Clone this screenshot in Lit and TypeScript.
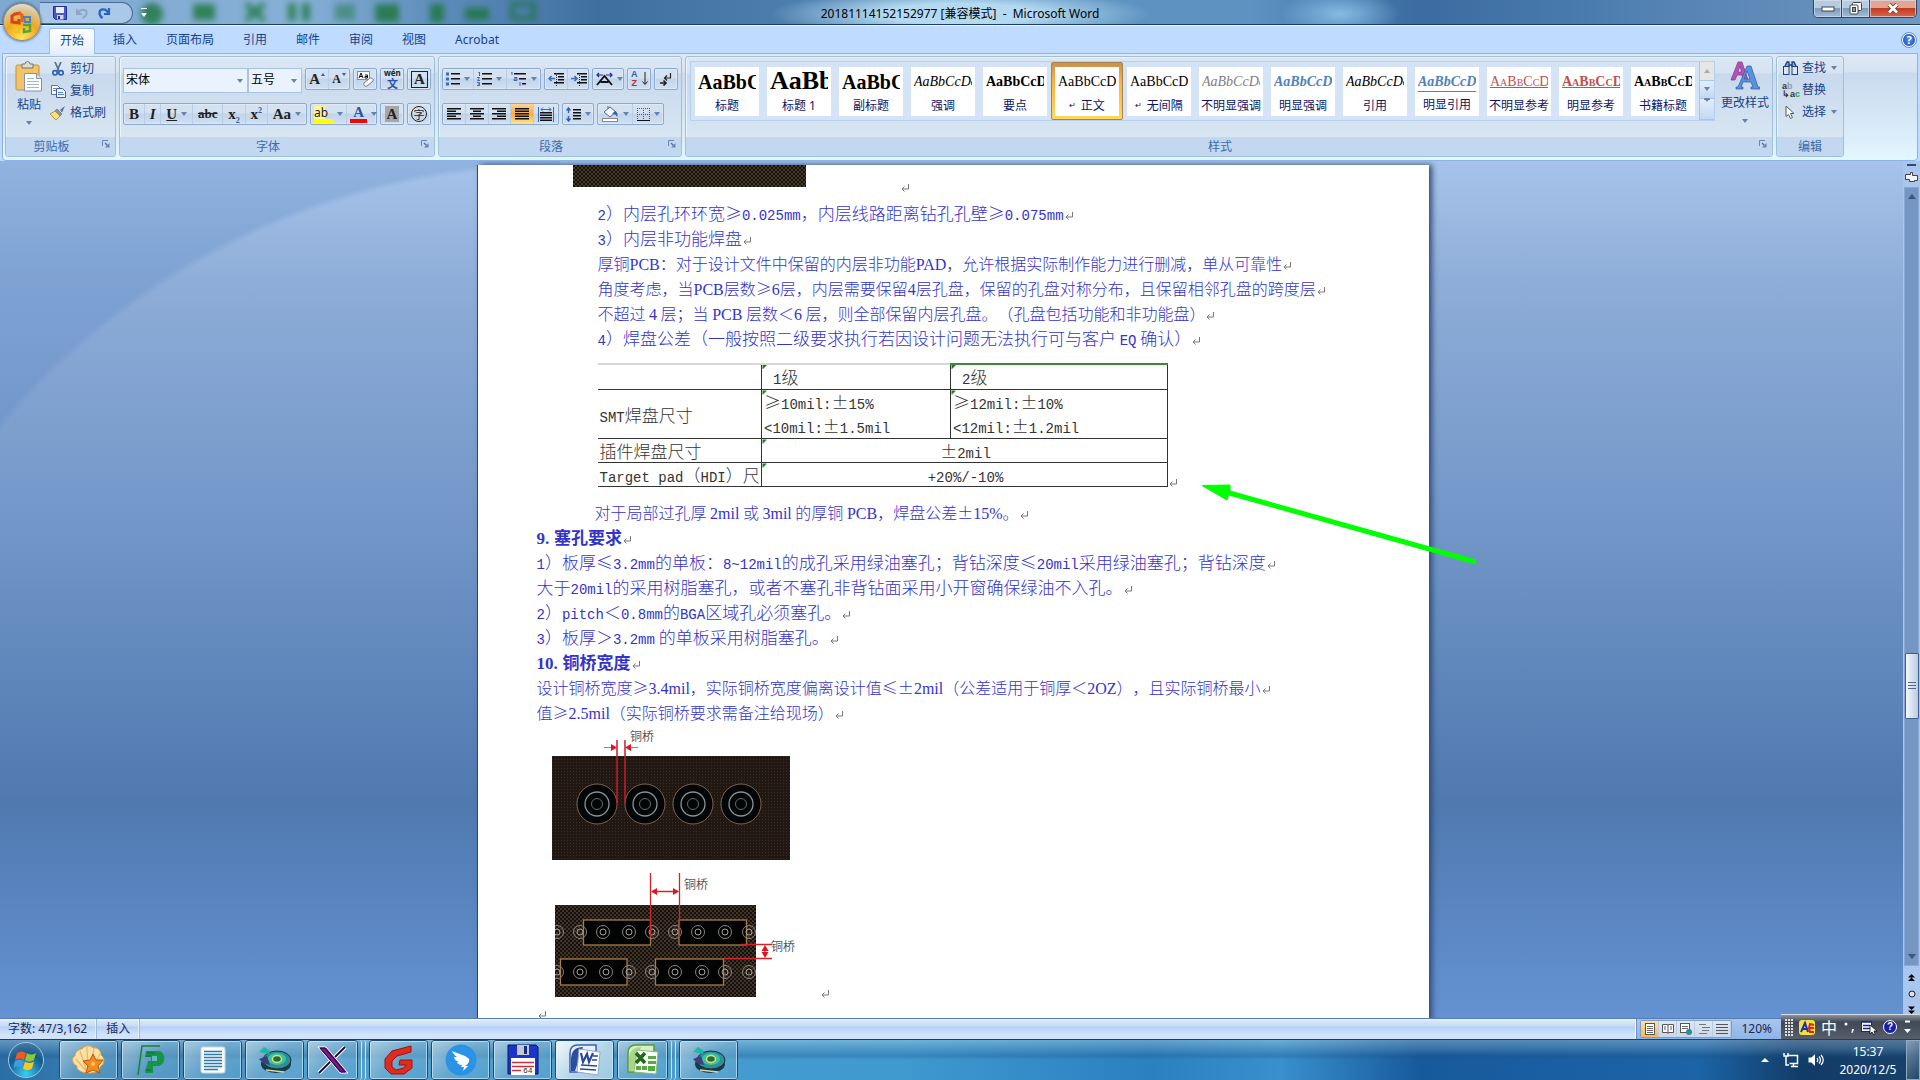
import { LitElement, html, css, svg, nothing, TemplateResult } from "lit";
import { customElement, property } from "lit/decorators.js";
import { classMap } from "lit/directives/class-map.js";

const lines = (rows: number[][], color = "#111") =>
  rows.map(([x, y, w]) => svg`<rect x=${x} y=${y} width=${w} height="1.5" fill=${color} />`);

const icons: Record<string, { w: number; h: number; body: TemplateResult | TemplateResult[] | any }> = {
  save: { w: 14, h: 14, body: svg`<path d="M0.500 0.500h13v13h-11l-2-2z" fill="#4b57c8" stroke="#25308c"/><rect x="3" y="1" width="8" height="6" fill="#e9effa"/><rect x="4" y="9" width="6.500" height="4.500" fill="#cfd6ee"/><rect x="5" y="10" width="2" height="3" fill="#25308c"/>` },
  undo: { w: 14, h: 14, body: svg`<path d="M2 3v5h5M2.500 7.500C5 3 11 2.500 11.500 6.500C12 9.500 9.500 11 7.500 12" fill="none" stroke="#8ea6c4" stroke-width="2"/>` },
  redo: { w: 14, h: 14, body: svg`<path d="M12 2v6H7M11.500 7.500C9 2 3 2.500 2.500 6.500C2.300 9.500 4 11 5.500 12" fill="none" stroke="#2c62c4" stroke-width="2.200"/>` },
  paste: { w: 28, h: 31, body: svg`<rect x="1" y="4" width="23" height="25" rx="1.500" fill="#f2c468" stroke="#c28f35"/><path d="M7 3h3a2.500 2.500 0 0 1 5 0h3v4H7z" fill="#dcdcd6" stroke="#77766c"/><path d="M9.500 12.500h12l5 5v12.500h-17z" fill="#fdfeff" stroke="#8293b4"/><path d="M21.500 12.500v5h5" fill="#d7e2f5" stroke="#8293b4"/><path d="M12 17.500h7M12 20.500h12M12 23.500h12M12 26.500h12" stroke="#a3b3d2"/>` },
  cut: { w: 14, h: 14, body: svg`<path d="M4 0l4 9M10 0l-4 9" stroke="#5a6f93" stroke-width="1.700"/><circle cx="4" cy="10.800" r="2.200" fill="none" stroke="#2e62b5" stroke-width="1.700"/><circle cx="10" cy="10.800" r="2.200" fill="none" stroke="#2e62b5" stroke-width="1.700"/>` },
  copy: { w: 15, h: 14, body: svg`<path d="M0.500 1.500h6l3 3v6h-9z" fill="#fff" stroke="#5174b4"/><path d="M5.500 4.500h6l3 3v6h-9z" fill="#eef4ff" stroke="#3c60a8"/><path d="M2 4.500h3M2 6.500h3M7 8.500h5M7 10.500h6" stroke="#5a80c4"/>` },
  brush: { w: 16, h: 14, body: svg`<path d="M15 0l-5 4 2 2.500z" fill="#5c63a8"/><path d="M7 3l5 5-2 2-5.500-4.500z" fill="#8f93a4" stroke="#555b78" stroke-width=".6"/><path d="M5 5l5 5-4 4L0 8z" fill="#f7e27a" stroke="#9d8433" stroke-width=".8"/>` },
  bullets: { w: 14, h: 14, body: svg`<rect x="0" y="0.500" width="3" height="3" fill="#3d68b4"/><rect x="0" y="5.500" width="3" height="3" fill="#3d68b4"/><rect x="0" y="10.500" width="3" height="3" fill="#3d68b4"/>${lines([[5, 1, 9], [5, 6, 9], [5, 11, 9]])}` },
  numbering: { w: 15, h: 14, body: svg`<path d="M1 0l1.500 0v4M0 5.500h2.500l-2 3h2.500M0 10.500h2.500v3h-2.500M1 12h1" fill="none" stroke="#3d68b4"/>${lines([[5, 1, 10], [5, 6, 10], [5, 11, 10]])}` },
  multilevel: { w: 17, h: 15, body: svg`<path d="M1 0h1v3M4 5.500h3v3h-3v-1.500h3M10 10v4" fill="none" stroke="#3d68b4"/>${lines([[4, 1, 12], [9, 6, 7], [12, 11, 4]])}` },
  outdent: { w: 16, h: 13, body: svg`${lines([[6, 0, 10], [10, 3, 6], [10, 6, 6], [6, 9, 10]])}<path d="M8.500 0v13" stroke="#333" stroke-dasharray="1 1"/><path d="M7 5.500H1M3.500 3L1 5.500L3.500 8" fill="none" stroke="#3d68b4" stroke-width="1.500"/>` },
  indent: { w: 16, h: 13, body: svg`${lines([[6, 0, 10], [10, 3, 6], [10, 6, 6], [6, 9, 10]])}<path d="M8.500 0v13" stroke="#333" stroke-dasharray="1 1"/><path d="M0 5.500H6M3.500 3L6 5.500L3.500 8" fill="none" stroke="#3d68b4" stroke-width="1.500"/>` },
  asian: { w: 17, h: 14, body: svg`<path d="M1 13L8.500 4L16 13M4.500 10h8" fill="none" stroke="#111" stroke-width="1.800"/><path d="M1 3h6M3 1L1 3l2 2M10 3h6M14 1l2 2-2 2" fill="none" stroke="#1b2a9c" stroke-width="1.200"/>` },
  pilcrow: { w: 12, h: 13, body: svg`<path d="M10.500 0v5H5M7 2.500L4.500 5L7 7.500" fill="none" stroke="#222" stroke-width="1.200"/><path d="M0 10h5M3.500 7.500L6 10l-2.500 2.500" fill="none" stroke="#222" stroke-width="1.600"/>` },
  left: { w: 14, h: 12, body: lines([[0, 0, 14], [0, 2.5, 9], [0, 5, 14], [0, 7.5, 9], [0, 10, 14]]) },
  center: { w: 14, h: 12, body: lines([[0, 0, 14], [3, 2.5, 8], [0, 5, 14], [3, 7.5, 8], [0, 10, 14]]) },
  right: { w: 14, h: 12, body: lines([[0, 0, 14], [5, 2.5, 9], [0, 5, 14], [5, 7.5, 9], [0, 10, 14]]) },
  justify: { w: 14, h: 12, body: lines([[0, 0, 14], [0, 2.5, 14], [0, 5, 14], [0, 7.5, 14], [0, 10, 14]]) },
  distribute: { w: 16, h: 15, body: svg`<path d="M0.500 0v15M15.500 0v15M3 2.500h10M5 0.500L3 2.500l2 2M11 0.500l2 2-2 2" fill="none" stroke="#3d68b4"/>${lines([[2, 5, 12], [2, 7.5, 12], [2, 10, 12], [2, 12.5, 12]])}` },
  spacing: { w: 15, h: 15, body: svg`<path d="M2.500 1v5M0.500 3.500l2-2.500 2 2.500M2.500 14V9M0.500 11.500l2 2.500 2-2.500" fill="none" stroke="#2f5fb0" stroke-width="1.400"/>${lines([[7, 2, 8], [7, 5, 8], [7, 8, 8], [7, 11, 8]])}` },
  bucket: { w: 17, h: 16, body: svg`<path d="M2 6l6-5 6 5-6 5z" fill="#f4f7fb" stroke="#516a92"/><path d="M6 3V0" stroke="#516a92"/><path d="M13 5c3 1 3 5 2 6-1-3-3-3-5-3z" fill="#3b5f9f"/><rect x="0.500" y="12.500" width="15" height="3" fill="#fff" stroke="#8a8a8a"/>` },
  borders: { w: 13, h: 13, body: svg`<path d="M0.500 0v12M6.500 0v12M12.500 0v12M0 0.500h13M0 6.500h13" stroke="#555" stroke-dasharray="1 1" fill="none"/><path d="M0 12.500h13" stroke="#111"/>` },
  eraser: { w: 17, h: 16, body: svg`<rect x="0.500" y="0.500" width="12" height="8" fill="#f4f8ff" stroke="#7a8fb4"/><path d="M2 7l2-5 2 5M2.800 5.500h2.500M8 4h2.500v3h-2.500v-1.500h2.500" stroke="#111" fill="none"/><path d="M7 12l6-5c2 0 4 1 3 3l-6 5c-2 1-4-1-3-3z" fill="#fdfdfd" stroke="#777"/>` },
  changeStyles: { w: 30, h: 29, body: svg`<path d="M1 19L8 1h4l6 18h-4l-2-5H7l-2 5zM8 11h3.500L10 5z" fill="#b653b5" stroke="#7d3080" stroke-width=".7"/><path d="M6 28v-2h2L17 5h4l7 21h2v2h-9v-2h2l-2-5h-8l-2 5h2v2zM14 18h6l-3-8z" fill="#5a93dc" stroke="#2b5ca6" stroke-width=".7"/>` },
  find: { w: 15, h: 14, body: svg`<path d="M2 5l2-4h2v5M13 5l-2-4H9v5M6 4h3" fill="#88a6d6" stroke="#203f7d" stroke-width="1.300"/><rect x="0.500" y="5.500" width="5.500" height="8" fill="#dbe6f6" stroke="#203f7d"/><rect x="9" y="5.500" width="5.500" height="8" fill="#dbe6f6" stroke="#203f7d"/>` },
  select: { w: 11, h: 14, body: svg`<path d="M1 1v10.500l2.500-2 2 4 2-1-2-4h3.500z" fill="#fff" stroke="#555d6f"/>` },
  launcher: { w: 8, h: 8, body: svg`<path d="M0.500 6V0.500H6" fill="none" stroke="#6a87b4"/><path d="M3 3l3 3" stroke="#4f6f9f" stroke-width="1.200"/><path d="M7.500 3v4.500H3z" fill="#6a87b4"/>` },
  ret: { w: 8, h: 8, body: svg`<path d="M7.500 0v5H1M3.500 2.500L1 5l2.500 2.500" fill="none" stroke="#777"/>` },
  network: { w: 17, h: 16, body: svg`<path d="M4.500 3.500h10v8h-8" fill="none" stroke="#fff" stroke-width="1.500"/><path d="M8 14.500h7M10.500 11.500v3" stroke="#fff" stroke-width="1.500"/><path d="M1 1v3h4V1M3 4v9h3" fill="none" stroke="#fff" stroke-width="1.500"/>` },
  volume: { w: 16, h: 14, body: svg`<path d="M0.500 4.500h3L7 1v12L3.500 9.500h-3z" fill="#fff"/><path d="M9 5q1.500 2 0 4M11 3.500q3 3.500 0 7M13 2q4.500 5 0 10" fill="none" stroke="#fff" stroke-width="1.200"/>` },
  shell: { w: 34, h: 30, body: svg`<path d="M17 28C10 28 4 25 5 21C-1 18 0 12 3 11C3 6 8 4 10 4C13 0 19 0 21 3C26 2 29 6 29 10C33 13 33 19 28 22C28 26 23 28 17 28z" fill="#fde0a4" stroke="#e0a04a"/><path d="M15 27L4 14M15 27L8 6M16 27L15 2M17 27L22 4M18 27L28 9" stroke="#efb566" stroke-width="1.300"/><path d="M21 9l3 6 7 0-5 6 2 7-7-3-7 3 2-7-5-5 7-1z" fill="#f58a1f" stroke="#b55a0c"/><circle cx="21" cy="19" r="2" fill="#fbc26a"/>` },
  pads: { w: 32, h: 32, body: svg`<path d="M3 31L7 2H25" fill="none" stroke="#13833a" stroke-width="1.500"/><path d="M11 7h12c8 0 9 14 0 15h-5v7h-8l3-12h3v-4h-6z" fill="#159447"/><path d="M17 12h5v5h-5z" fill="#5fb6c4"/><path d="M12 9h8M11 12h5M10 26h6" stroke="#0c6f30"/>` },
  notepad: { w: 26, h: 28, body: svg`<rect x="1" y="1" width="24" height="26" rx="2" fill="#f7fbfd" stroke="#c4d8e2"/><path d="M4 5.500h18M4 8.500h18M4 11.500h18M4 14.500h18M4 17.500h18M4 20.500h18M4 23.500h14" stroke="#2c7ba6" stroke-width="1.400"/>` },
  reel: { w: 34, h: 28, body: svg`<ellipse cx="18" cy="18" rx="15" ry="9" fill="#1c3a4a"/><ellipse cx="19" cy="14" rx="14" ry="9" fill="#2f8f94" stroke="#14323c"/><ellipse cx="19" cy="13" rx="9" ry="6" fill="#38c4a8"/><ellipse cx="19" cy="13" rx="4.500" ry="3.500" fill="#1f6b4c" stroke="#e4de62" stroke-width="1.500"/><path d="M1 6l5-5 6 4-1 3z" fill="#1fb7a6"/><path d="M1 13l8-3 3 9-7-2z" fill="#3c3f7a"/><path d="M8 24l18 2" stroke="#cfd9a0" stroke-width="1.500"/>` },
  cross: { w: 32, h: 28, body: svg`<path d="M28 1L2 27" stroke="#fff" stroke-width="4"/><path d="M28 1L2 27" stroke="#1e0d2c" stroke-width="2"/><path d="M1 1h8l22 26h-8z" fill="#6b1280" stroke="#fff"/><path d="M3 2h5l20 24h-4z" fill="#7c1894" stroke="#1d0a25"/>` },
  gee: { w: 30, h: 30, body: svg`<path d="M27 1v6l-14 4-5 5v6l4 3 8-2 2-3h-7l1-5h12v8l-8 6-13 0-6-6v-9l7-8z" fill="#e02b20" stroke="#9d130d"/>` },
  bird: { w: 32, h: 32, body: svg`<circle cx="16" cy="16" r="15.500" fill="#2a93e6"/><path d="M7 7c6 3 14 4 17 8 1 3-2 6-4 7l3 0-5 5 1-4-3 0 1-2c-3 0-5-2-5-3l2 0c-3-1-5-3-5-5l3 0c-3-2-4-4-5-6z" fill="#fff"/>` },
  floppy: { w: 32, h: 32, body: svg`<path d="M1 1h28l2 2v27H1z" fill="#1c34c8" stroke="#0a145e"/><rect x="10" y="1" width="12" height="10" fill="#c3c8d4"/><rect x="17" y="2" width="3" height="8" fill="#1c2c80"/><rect x="4" y="14" width="24" height="17" fill="#fff"/><path d="M5 18.500h22M5 22.500h22M5 26.500h9" stroke="#c8323c" stroke-width="1.300"/><text x="16" y="29" font-size="8" font-family="Liberation Mono, monospace" fill="#333">64</text>` },
  word: { w: 32, h: 32, body: svg`<path d="M1 28V9Q1 1 9 1H27V28z" fill="#e8eefa" stroke="#3a5fae" stroke-width="1.500"/><path d="M2 27V14Q3 3 14 3L6 27z" fill="#2a4f9f"/><path d="M10 5l21 3-2 23-21-3z" fill="#fdfeff" stroke="#93a6cf"/><path d="M12 9l2 9 4-8 2 8 4-9" fill="none" stroke="#28489a" stroke-width="2.200"/><path d="M24 12h5M23 16h5M12 21l16 1M11 25l16 1" stroke="#28489a" stroke-width="1.600"/>` },
  excel: { w: 32, h: 32, body: svg`<path d="M1 28V9Q1 1 9 1H27V28z" fill="#d9efc8" stroke="#5a9c32" stroke-width="1.500"/><path d="M2 27V14Q3 3 14 3L6 27z" fill="#a9d48a"/><path d="M10 6l21 2-2 22-22-2z" fill="#fbfffa" stroke="#8cba74"/><path d="M9 9l9 10M18 9l-9 10" stroke="#1f6a1b" stroke-width="3.500"/><path d="M21 12h8v3h-8zM21 17h8v3h-8zM9 22h5v4h-5zM15 22h5v4h-5zM21 22h7v5h-7z" fill="#5aa845"/>` },
};

const icon = (name: string) => {
  const i = icons[name];
  return html`<svg class="ic" width=${i.w} height=${i.h} viewBox="0 0 ${i.w} ${i.h}" aria-hidden="true">${i.body}</svg>`;
};

const caret = html`<span class="caret"></span>`;

/** Wraps each run of Latin words so that it gets its own typeface; spaces beside Chinese text stay outside. */
const mixed = (text: string) =>
  text.split(/([\x21-\x7e]+(?: [\x21-\x7e]+)*)/).filter(Boolean).map((part) =>
    /^[\x21-\x7e]/.test(part) ? html`<span class="latin">${part}</span>` : part);

const sharedStyles = css`
  * { box-sizing: border-box; }
  button, select { font: inherit; color: inherit; margin: 0; padding: 0; border: 0; background: none; border-radius: 0; }
  .ic { display: block; flex: none; }
  .caret { flex: none; border: 3px solid transparent; border-top: 4px solid #6482b0; border-bottom: 0; width: 0; height: 0; }
`;

@customElement("title-bar")
class TitleBar extends LitElement {
  static styles = [sharedStyles, css`
    :host {
      display: flex; height: 25px; position: relative; overflow: hidden;
      border-bottom: 1px solid #eaf5ff; box-shadow: inset 0 -1px #1d3c5e;
      background:
        radial-gradient(ellipse 190px 26px at 960px 14px, #b4daf2 40%, transparent 100%),
        radial-gradient(ellipse 60px 24px at 1340px 14px, #86bbe4, transparent),
        linear-gradient(90deg, #7ea8cf 0, #86b0d6 300px, #5c8cba 440px, #3f6f9f 600px, #4777a6 700px, #5d93c0 1100px, #5e92c2 1250px, #3b6ba0 1420px, #4c7db0 1600px, #4d7db0 75%, #7097c0);
    }
    .reflections { position: absolute; left: 0; top: 0; filter: blur(3px); opacity: .75; }
    .side { flex: 1; display: flex; align-items: flex-start; }
    .side.end { justify-content: flex-end; }
    .quick { position: relative; display: flex; align-items: center; gap: 8px; margin: 2px 0 0 40px; padding: 0 13px;
      border: 1px solid #486c95; border-left: 0; border-radius: 0 11px 11px 0; background: #b4cfeccc; height: 22px; width: 93px; }
    .quick button { display: block; }
    .more { position: relative; margin: 8px 8px; width: 6px; height: 9px; border-top: 1px solid #fff; padding-top: 3px; }
    .more .caret { display: block; border-top-color: #fff; }
    h1 { position: relative; margin: 0; font: 12px/27px "Noto Sans", "Noto Sans CJK SC", sans-serif; color: #000; white-space: pre; }
    .window { position: relative; display: flex; height: 18px; margin-right: 3px; border: 1px solid #2b4868; border-top: 0; border-radius: 0 0 5px 5px; overflow: hidden; }
    .window button { display: grid; place-items: center; width: 28px; border-right: 1px solid #2b4868; box-shadow: inset 0 0 0 1px #d5e3f0aa; background: linear-gradient(#b8cbdf 45%, #7e9cbb 50%, #a4bdd6); }
    .window .close { width: 46px; border: 0; background: linear-gradient(#e3a493 45%, #c13a23 50%, #d9674c); }
  `];
  render() {
    return html`
      <svg class="reflections" width="700" height="26" aria-hidden="true">
        <g fill="#167332">
          <circle cx="152" cy="14" r="11"/><rect x="193" y="4" width="22" height="16"/>
          <path d="M246 4l18 16M264 4l-18 16" stroke="#167332" stroke-width="6"/><rect x="288" y="3" width="8" height="18"/><rect x="302" y="3" width="8" height="18"/>
          <rect x="335" y="4" width="20" height="16" opacity=".6"/><rect x="375" y="4" width="24" height="18"/><rect x="430" y="4" width="14" height="18"/>
          <rect x="465" y="8" width="24" height="12"/><rect x="512" y="4" width="22" height="14" fill="none" stroke="#167332" stroke-width="4"/>
        </g>
      </svg>
      <div class="side">
        <div class="quick">
          <button aria-label="保存">${icon("save")}</button><button aria-label="撤消">${icon("undo")}</button><button aria-label="恢复">${icon("redo")}</button>
        </div>
        <button class="more" aria-label="自定义快速访问工具栏">${caret}</button>
      </div>
      <h1>20181114152152977 [兼容模式]  -  Microsoft Word</h1>
      <div class="side end"><div class="window">
        <button aria-label="最小化"><svg width="14" height="8"><rect x="1" y="2" width="12" height="4" fill="#fff" stroke="#444"/></svg></button>
        <button aria-label="还原"><svg width="13" height="13"><rect x="3.500" y="0.500" width="9" height="8" rx="1" fill="#fff" stroke="#444"/><rect x="1" y="3" width="8" height="9" rx="1" fill="#fff" stroke="#444"/><rect x="3.500" y="5.500" width="3" height="4" fill="#7e9cbb" stroke="#444"/></svg></button>
        <button class="close" aria-label="关闭"><svg width="14" height="11"><path d="M3 1.500l8 8M11 1.500l-8 8" stroke="#543" stroke-width="4.500"/><path d="M3 1.500l8 8M11 1.500l-8 8" stroke="#fff" stroke-width="2.800"/></svg></button>
      </div></div>`;
  }
}

@customElement("ribbon-group")
class RibbonGroup extends LitElement {
  @property() label = "";
  @property({ type: Boolean }) launcher = false;
  static styles = [sharedStyles, css`
    :host { display: flex; flex-direction: column; height: 101px; border: 1px solid #9fbfdb; border-radius: 3px; overflow: hidden;
      box-shadow: inset 1px 1px #eaf3fc; background: linear-gradient(#dce7f4 0, #d7e3f2 16px, #c8d9ed 17px, #d8e6f2 80px); }
    .body { flex: 1; min-height: 0; }
    footer { display: flex; align-items: center; height: 19px; background: #c1d8f0; color: #3e6aaa; padding: 0 5px; }
    span { flex: 1; text-align: center; }
    span.offset { padding-right: 10px; }
    button { margin-top: -5px; }
  `];
  render() {
    return html`<div class="body"><slot></slot></div>
      <footer><span class=${this.launcher ? "offset" : ""}>${this.label}</span>${this.launcher ? html`<button aria-label=${this.label + "设置"}>${icon("launcher")}</button>` : nothing}</footer>`;
  }
}

const styleCards = [
  { name: "标题", kind: "big", sample: "AaBbC" }, { name: "标题 1", kind: "huge", sample: "AaBb" }, { name: "副标题", kind: "big", sample: "AaBbC" },
  { name: "强调", kind: "italic" }, { name: "要点", kind: "bold", sample: "AaBbCcD" }, { name: "正文", kind: "", mark: true, selected: true },
  { name: "无间隔", kind: "", mark: true }, { name: "不明显强调", kind: "italic grey" }, { name: "明显强调", kind: "italic bold blue" },
  { name: "引用", kind: "italic" }, { name: "明显引用", kind: "italic bold blue ruled" }, { name: "不明显参考", kind: "caps red under", sample: "AaBbCcD" },
  { name: "明显参考", kind: "caps red bold under", sample: "AaBbCcD" }, { name: "书籍标题", kind: "caps bold", sample: "AaBbCcD" },
];

@customElement("word-ribbon")
class WordRibbon extends LitElement {
  static styles = [sharedStyles, css`
    :host { display: block; background: #bfdbff; font: 12px/16px "Noto Sans", "Noto Sans CJK SC", sans-serif; color: #15428b; }
    nav { display: flex; align-items: flex-end; gap: 7px; height: 27px; padding: 0 4px 0 49px; }
    nav button { height: 25px; padding: 0 11px 2px; }
    nav .active { background: linear-gradient(#fff, #e4effb); border: 1px solid #9dc0ea; border-bottom: 0; border-radius: 3px 3px 0 0; padding: 0 10px 2px; margin-bottom: -1px; height: 26px; z-index: 1; }
    .help { margin: 0 0 6px auto; padding: 0; height: 14px; width: 14px; border-radius: 50%; background: radial-gradient(#4f8ae8, #1d4fb4); border: 1px solid #fff; outline: 1px solid #6c94cf; color: #fff; font-weight: 700; font-size: 11px; line-height: 12px; }
    .panel { display: flex; gap: 3px; margin: 0 2px; padding: 2px 73px 3px 2px; border: 1px solid #8db2e3; border-radius: 0 0 4px 4px; background: linear-gradient(#dfe9f5 0, #d5e3f2 18px, #c9daee 19px, #dceefa 85px, #e2f8ff); }
    .cols { display: flex; height: 100%; }
    .tool { display: flex; align-items: center; gap: 4px; height: 22px; white-space: nowrap; }
    .tool .slot { width: 16px; display: grid; place-items: center; }
    .big { display: flex; flex-direction: column; align-items: center; height: 70px; white-space: nowrap; }
    .big .txt { margin: 5px 0 8px; }
    .clip { gap: 7px; padding: 4px 0 0 9px; }
    .clip .stack { margin: -3px 0 0; }
    .rows { display: flex; flex-direction: column; padding: 11px 3px 0; }
    .row { display: flex; gap: 3px; height: 35px; align-items: flex-start; }
    .set { display: flex; height: 22px; border: 1px solid #8ba9d3; border-radius: 2px; box-shadow: inset 0 0 0 1px #e8f1fb88; background: linear-gradient(#d4e1f1 45%, #c2d4ea 50%, #d0e0f2); }
    .set button { flex: auto; display: flex; align-items: center; justify-content: center; gap: 4px; padding: 0 3px; border-right: 1px solid #b9cde6; }
    .set button:last-child { border-right: 0; }
    .set .on { background: linear-gradient(#fbd49a, #fdac3c 50%, #ffe58c); }
    .combo { display: flex; align-items: center; height: 25px; border: 1px solid #a9c3e5; background: #eaf3fd; color: #000; padding-right: 4px; }
    .combo select { appearance: none; flex: 1; min-width: 0; height: 100%; padding: 0 2px 2px; }
    .combo + .combo { margin-left: -3px; }
    .family { width: 125px; } .size { width: 54px; }
    .glyph { font: bold 15px/18px "Liberation Serif", serif; color: #222; }
    .glyph.small { font-size: 12px; } .glyph.i { font-style: italic; } .glyph.u { text-decoration: underline; }
    .glyph.s { text-decoration: line-through; font-size: 13px; }
    .glyph sub, .glyph sup { font-size: 8px; line-height: 0; color: #2d5cb4; }
    .glyph.boxed { border: 1px solid #222; padding: 0 2px; line-height: 15px; }
    .glyph.shade { background: #a7a7a7; padding: 0 2px; line-height: 16px; }
    .glyph.ring { border: 1px solid #222; border-radius: 50%; width: 16px; height: 16px; font: 11px/14px "Noto Sans CJK SC", sans-serif; text-align: center; }
    .glyph.pen { font: 12px/13px "Noto Sans", sans-serif; border-bottom: 4px solid #ff0; padding-right: 5px; background: linear-gradient(90deg, #fff59a 60%, transparent 60%); }
    .glyph.ink { color: #2b579a; line-height: 14px; border-bottom: 4px solid #f00; padding: 0 3px; }
    .tip { width: 0; height: 0; border: 2px solid transparent; margin: 0 0 9px -3px; }
    .tip.up { border-bottom: 3px solid #2d5cb4; border-top: 0; } .tip.down { border-top: 3px solid #2d5cb4; border-bottom: 0; }
    .phonetic { font: 700 8px/8px "Noto Sans", sans-serif; color: #222; }
    .phonetic b { display: block; font: 700 11px/12px "Noto Sans CJK SC", sans-serif; color: #2c50b0; }
    .az { font: bold 9px/9px "Liberation Sans", sans-serif; color: #2d5cb4; } .az b { display: block; color: #a83232; }
    .gallery { flex: 1; display: flex; height: 60px; margin: 4px 6px 0 4px; border: 1px solid #b5cfed; background: #d4e4f6; }
    .cards { flex: 1; display: flex; overflow: hidden; }
    .card { flex: none; width: 72px; height: 58px; padding: 4px 4px; }
    .card .face { display: block; width: 64px; height: 49px; background: #fff; padding: 0 3px; overflow: hidden; }
    .card.selected { padding: 1px; background: linear-gradient(#c8924c, #fbb040 30%, #ffd75e); border: 1px solid #a58357; border-radius: 2px; }
    .card.selected .face { margin: 2px; }
    .sample { display: block; overflow: hidden; white-space: nowrap; height: 30px; text-align: left; color: #000; font: 14px/30px "Liberation Serif", serif; }
    .sample.big { font-weight: 700; font-size: 20px; }
    .sample.huge { font-weight: 700; font-size: 26px; line-height: 28px; }
    .sample.italic { font-style: italic; } .sample.bold { font-weight: 700; }
    .sample.grey { color: #808080; } .sample.blue { color: #4f81bd; } .sample.red { color: #c0504d; }
    .sample.caps { font-variant: small-caps; } .sample.under { text-decoration: underline; }
    .sample.ruled { height: 25px; border-bottom: 1px solid #4f81bd; margin-bottom: 5px; }
    .name { display: flex; justify-content: center; align-items: center; gap: 5px; height: 16px; white-space: nowrap; color: #0a1468; margin: 1px -3px 0; }
    .mark { font: 8px/9px "DejaVu Sans", sans-serif; }
    .scroll { display: flex; flex-direction: column; width: 15px; border-left: 1px solid #a9c4e6; }
    .scroll button { flex: 1; display: grid; place-items: center; border-bottom: 1px solid #a9c4e6; background: linear-gradient(#e3eefb, #c3d8f2); }
    .scroll button:first-child { background: #e6e6e6; }
    .scroll .up { transform: rotate(180deg); border-top-color: #aaa; }
    .scroll .end { border-top: 1px solid #6482b0; padding-top: 3px; }
    .change { width: 56px; margin-right: 4px; padding-top: 4px; height: 76px; }
    .edit { padding: 0 0 0 5px; }
    .edit .caret { margin-left: 1px; }
    .ab { font: bold 9px/8px "Liberation Sans", sans-serif; color: #333; text-align: left; }
    .ab i { font-style: normal; color: #999; } .ab b { color: #3a9a3a; }
    .clipboard { width: 111px; } .font { width: 316px; } .para { width: 244px; } .styles { flex: 1; min-width: 0; } .editing { width: 68px; }
    .w24 { width: 24px; } .w32 { width: 32px; } .w45 { width: 45px; } .w67 { width: 67px; } .w99 { width: 99px; } .w117 { width: 117px; } .w183 { width: 184px; }
  `];

  private tool(name: string, label: string, arrow = false) {
    return html`<button class="tool"><span class="slot">${icon(name)}</span><span>${label}</span>${arrow ? caret : nothing}</button>`;
  }
  private act(name: string, label: string, arrow = false, on = false) {
    return html`<button class=${classMap({ on })} aria-label=${label}>${icon(name)}${arrow ? caret : nothing}</button>`;
  }

  render() {
    return html`
      <nav>
        ${["开始", "插入", "页面布局", "引用", "邮件", "审阅", "视图", "Acrobat"].map((t, i) => html`<button class=${classMap({ active: i === 0 })}>${t}</button>`)}
        <button class="help" aria-label="帮助">?</button>
      </nav>
      <div class="panel">
        <ribbon-group class="clipboard" label="剪贴板" launcher>
          <div class="cols clip">
            <button class="big">${icon("paste")}<span class="txt">粘贴</span>${caret}</button>
            <div class="stack">${this.tool("cut", "剪切")}${this.tool("copy", "复制")}${this.tool("brush", "格式刷")}</div>
          </div>
        </ribbon-group>
        <ribbon-group class="font" label="字体" launcher>
          <div class="rows">
            <div class="row">
              <div class="combo family"><select aria-label="字体"><option>宋体</option></select>${caret}</div>
              <div class="combo size"><select aria-label="字号"><option>五号</option></select>${caret}</div>
              <div class="set w45"><button aria-label="增大字体"><span class="glyph">A</span><span class="tip up"></span></button><button aria-label="缩小字体"><span class="glyph small">A</span><span class="tip down"></span></button></div>
              <div class="set w24">${this.act("eraser", "清除格式")}</div>
              <div class="set w24"><button aria-label="拼音指南"><span class="phonetic">wén<b>文</b></span></button></div>
              <div class="set w24"><button aria-label="字符边框"><span class="glyph boxed">A</span></button></div>
            </div>
            <div class="row">
              <div class="set w183">
                <button aria-label="加粗"><span class="glyph">B</span></button><button aria-label="倾斜"><span class="glyph i">I</span></button>
                <button aria-label="下划线"><span class="glyph u">U</span>${caret}</button><button aria-label="删除线"><span class="glyph s">abc</span></button>
                <button aria-label="下标"><span class="glyph">x<sub>2</sub></span></button><button aria-label="上标"><span class="glyph">x<sup>2</sup></span></button>
                <button aria-label="更改大小写"><span class="glyph">Aa</span>${caret}</button>
              </div>
              <div class="set w67"><button aria-label="突出显示"><span class="glyph pen">ab</span>${caret}</button><button aria-label="字体颜色"><span class="glyph ink">A</span>${caret}</button></div>
              <div class="set w24"><button aria-label="字符底纹"><span class="glyph shade">A</span></button></div>
              <div class="set w24"><button aria-label="带圈字符"><span class="glyph ring">字</span></button></div>
            </div>
          </div>
        </ribbon-group>
        <ribbon-group class="para" label="段落" launcher>
          <div class="rows">
            <div class="row">
              <div class="set w99">${this.act("bullets", "项目符号", true)}${this.act("numbering", "编号", true)}${this.act("multilevel", "多级列表", true)}</div>
              <div class="set w45">${this.act("outdent", "减少缩进量")}${this.act("indent", "增加缩进量")}</div>
              <div class="set w32">${this.act("asian", "中文版式", true)}</div>
              <div class="set w24"><button aria-label="排序"><span class="az">A<b>Z</b></span><svg width="6" height="14"><path d="M3 0v12M0.500 9.500L3 12.500l2.500-3" fill="none" stroke="#222"/></svg></button></div>
              <div class="set w24">${this.act("pilcrow", "显示编辑标记")}</div>
            </div>
            <div class="row">
              <div class="set w117">${this.act("left", "左对齐")}${this.act("center", "居中")}${this.act("right", "右对齐")}${this.act("justify", "两端对齐", false, true)}${this.act("distribute", "分散对齐")}</div>
              <div class="set w32">${this.act("spacing", "行距", true)}</div>
              <div class="set w67">${this.act("bucket", "底纹", true)}${this.act("borders", "边框", true)}</div>
            </div>
          </div>
        </ribbon-group>
        <ribbon-group class="styles" label="样式" launcher>
          <div class="cols">
            <div class="gallery">
              <div class="cards">
                ${styleCards.map((c) => html`<button class=${classMap({ card: true, selected: !!c.selected })}>
                  <span class="face"><span class="sample ${c.kind}">${c.sample ?? "AaBbCcDc"}</span><span class="name">${c.mark ? html`<span class="mark">↵</span>` : nothing}${c.name}</span></span></button>`)}
              </div>
              <div class="scroll"><button aria-label="上一行"><span class="caret up"></span></button><button aria-label="下一行">${caret}</button><button aria-label="其他"><span class="end">${caret}</span></button></div>
            </div>
            <button class="big change">${icon("changeStyles")}<span class="txt">更改样式</span>${caret}</button>
          </div>
        </ribbon-group>
        <ribbon-group class="editing" label="编辑">
          <div class="edit">
            ${this.tool("find", "查找", true)}
            <button class="tool"><span class="slot ab"><span>a<i>b</i><br>↳a<b>c</b></span></span><span>替换</span></button>
            ${this.tool("select", "选择", true)}
          </div>
        </ribbon-group>
      </div>`;
  }
}

const target = (x: number, y: number) => svg`<circle cx=${x} cy=${y} r="6.500" fill="none" stroke="#8b8580"/><circle cx=${x} cy=${y} r="3" fill="none" stroke="#aaa49e"/>`;

@customElement("word-document")
class WordDocument extends LitElement {
  static styles = [sharedStyles, css`
    :host { display: flex; flex: 1; min-height: 0; overflow: hidden;
      background: linear-gradient(#a6c4ea 0, #8eadd8 14%, #6f94c6 45%, #5079b0 75%, #6492d2); }
    .view { flex: 1; overflow: hidden; padding: 4px 0 0 3px; min-width: 0;
      background: radial-gradient(ellipse 720px 700px at 560px 700px, #4f80c000 0, #4f80c000 99%, #4f80c040 100%) 0 0 / 560px 100% no-repeat; }
    .page { position: relative; width: 951px; min-height: 100%; margin: 0 auto; padding: 0 59px; background: #fff; box-shadow: 3px 0 6px #2c4a77, -1px 0 #2c4a77; color: #3333cc; }
    p, h2 { display: flex; align-items: center; height: 25px; margin: 0; padding-bottom: 3px; white-space: nowrap; text-spacing-trim: space-all; font: 300 16px/22px "Noto Sans CJK SC", sans-serif; }
    .latin { font-family: "Liberation Serif", serif; white-space: pre; font-weight: 400; line-height: 1; }
    .song, h2 { font-size: 17px; }
    h2 { font-weight: 700; }
    h2 .latin { font-weight: 700; padding-right: 1px; }
    .song .latin, td .latin, th .latin { font-family: "Liberation Mono", monospace; font-size: 14px; }
    .in { margin-left: 61px; } .near { margin-left: 58px; }
    .ic { margin: 5px 0 0 1px; }
    .top { display: flex; gap: 94px; padding-left: 36px; height: 37px; }
    .top .ic { margin-top: 19px; }
    .mesh { width: 233px; height: 22px; background: #1c140e conic-gradient(#4a3c2c 25%, #14100c 0 50%, #4a3c2c 0 75%, #14100c 0) 0 0 / 4px 4px; }
    .tol { display: flex; align-items: flex-end; height: 125px; margin: 10px 0 14px 61px; }
    table { width: 570px; table-layout: fixed; border-collapse: collapse; color: #333; font: 300 17px/23px "Noto Sans CJK SC", sans-serif; white-space: nowrap; border-top: 2px solid #d8d8d8; }
    td, th { border: 1px solid #333; padding: 0 0 0 2px; text-align: left; font-weight: 300; overflow: hidden; }
    .two { line-height: 24px; }
    tr > :first-child { border-left: 0; }
    thead td, thead th { border-top: 0; height: 26px; }
    thead th { padding-left: 11px; }
    thead th:last-child { border-top: 2px solid #3a8a3a; }
    .mid { text-align: center; }
    .flag { background: linear-gradient(135deg, #1d7a1d 3px, transparent 3px); }
    figure { margin: 0; display: flex; align-items: flex-end; }
    figure svg { display: block; }
    figure .ic { margin: 0 0 9px -16px; }
    .last { height: 14px; padding: 0; }
    .last .ic { margin: 2px 0 0 1px; }
    .label { font: 12px "Noto Sans CJK SC", sans-serif; fill: #555; }
    .arrow { position: absolute; left: 723px; top: 318px; }
    .bar { width: 17px; flex: none; display: flex; flex-direction: column; align-items: center; background: #a9c6ee; }
    .split { width: 9px; height: 2px; background: #2f4a74; margin: 3px 0 6px; }
    .track { flex: 1; width: 15px; display: flex; flex-direction: column; align-items: center; background: #7596c2; border: 1px solid #88a8d3; margin: 5px 0 4px; padding: 6px 0; }
    .track i { border: 4px solid transparent; border-top: 5px solid #3a557f; border-bottom: 0; }
    .track i:first-child { transform: rotate(180deg); }
    .before { flex: 456; } .after { flex: 236; }
    .thumb { width: 14px; height: 66px; border: 1px solid #3f5f94; border-radius: 1px; background: linear-gradient(90deg, #f4f8fd, #b9cbe2) ; display: grid; place-items: center; }
    .thumb svg { display: block; }
    .jump { display: grid; place-items: center; height: 16px; width: 15px; }
  `];

  private line(text: string, cls = "") {
    return html`<p class=${cls}><span>${mixed(text)}</span>${icon("ret")}</p>`;
  }

  render() {
    return html`
      <div class="view"><article class="page">
        <div class="top"><div class="mesh"></div>${icon("ret")}</div>
        ${this.line("2）内层孔环环宽≥0.025mm，内层线路距离钻孔孔壁≥0.075mm", "song in")}
        ${this.line("3）内层非功能焊盘", "song in")}
        ${this.line("厚铜PCB：对于设计文件中保留的内层非功能PAD，允许根据实际制作能力进行删减，单从可靠性", "in")}
        ${this.line("角度考虑，当PCB层数≥6层，内层需要保留4层孔盘，保留的孔盘对称分布，且保留相邻孔盘的跨度层", "in")}
        ${this.line("不超过 4 层；当 PCB 层数＜6 层，则全部保留内层孔盘。（孔盘包括功能和非功能盘）", "in")}
        ${this.line("4）焊盘公差（一般按照二级要求执行若因设计问题无法执行可与客户 EQ 确认）", "song in")}
        <div class="tol">
          <table>
            <colgroup><col width="164"><col width="189"><col width="217"></colgroup>
            <thead><tr><td></td><th class="flag">${mixed("1级")}</th><th class="flag">${mixed("2级")}</th></tr></thead>
            <tbody>
              <tr><td>${mixed("SMT焊盘尺寸")}</td><td class="two flag">${mixed("≥10mil:±15%")}<br>${mixed("<10mil:±1.5mil")}</td><td class="two flag">${mixed("≥12mil:±10%")}<br>${mixed("<12mil:±1.2mil")}</td></tr>
              <tr><td>插件焊盘尺寸</td><td class="mid flag" colspan="2">${mixed("±2mil")}</td></tr>
              <tr><td>${mixed("Target pad（HDI）尺")}</td><td class="mid flag" colspan="2">${mixed("+20%/-10%")}</td></tr>
            </tbody>
          </table>${icon("ret")}
        </div>
        ${this.line("对于局部过孔厚 2mil 或 3mil 的厚铜 PCB，焊盘公差±15%。", "near")}
        <h2><span>${mixed("9. 塞孔要求")}</span>${icon("ret")}</h2>
        ${this.line("1）板厚≤3.2mm的单板：8~12mil的成孔采用绿油塞孔；背钻深度≤20mil采用绿油塞孔；背钻深度", "song")}
        ${this.line("大于20mil的采用树脂塞孔，或者不塞孔非背钻面采用小开窗确保绿油不入孔。", "song")}
        ${this.line("2）pitch＜0.8mm的BGA区域孔必须塞孔。", "song")}
        ${this.line("3）板厚＞3.2mm 的单板采用树脂塞孔。", "song")}
        <h2><span>${mixed("10. 铜桥宽度")}</span>${icon("ret")}</h2>
        ${this.line("设计铜桥宽度≥3.4mil，实际铜桥宽度偏离设计值≤±2mil（公差适用于铜厚＜2OZ），且实际铜桥最小")}
        ${this.line("值≥2.5mil（实际铜桥要求需备注给现场）")}
        <figure>
          <svg width="300" height="140" viewBox="537 726 300 140" role="img" aria-label="铜桥示意图一">
            <defs><pattern id="m1" width="3" height="3" patternUnits="userSpaceOnUse"><rect width="3" height="3" fill="#211814"/><rect width="1" height="1" fill="#3a2c24"/></pattern></defs>
            <rect x="552" y="756" width="238" height="104" fill="url(#m1)"/>
            ${[597, 645, 693, 741].map((x) => svg`<circle cx=${x} cy="804" r="20" fill="#030606" stroke="#80624c"/><circle cx=${x} cy="804" r="12" fill="none" stroke="#87939a" stroke-width="1.300"/><circle cx=${x} cy="804" r="5.500" fill="none" stroke="#6a6a6a"/>`)}
            <path d="M617 740v63M625 740v63" stroke="#c81e26" stroke-width="1.500"/>
            <path d="M604 747.500h10M628 747.500h10" stroke="#c86a70"/>
            <path d="M611 744l6 3.500-6 3.500zM631 744l-6 3.500 6 3.500z" fill="#e0141e"/>
            <text class="label" x="630" y="741">铜桥</text>
          </svg>
        </figure>
        <figure>
          <svg width="300" height="141" viewBox="537 866 300 141" role="img" aria-label="铜桥示意图二">
            <defs><pattern id="m2" width="4" height="4" patternUnits="userSpaceOnUse"><rect width="4" height="4" fill="#17110d"/><rect width="2" height="2" fill="#40342a"/><rect x="2" y="2" width="2" height="2" fill="#40342a"/></pattern><clipPath id="c2"><rect x="555" y="905" width="201" height="92"/></clipPath></defs>
            <rect x="555" y="905" width="201" height="92" fill="url(#m2)"/>
            <g fill="#020303" stroke="#a87a48" stroke-width="1.300"><rect x="583.500" y="920" width="67" height="25"/><rect x="679" y="920" width="67.500" height="25"/><rect x="560.500" y="959" width="66.500" height="26"/><rect x="655.500" y="959" width="68" height="26"/></g>
            <g clip-path="url(#c2)">${[557, 580, 603, 629, 652, 675, 698, 725, 749].map((x) => target(x, 932))}${[557, 580, 606, 629, 652, 675, 702, 725, 749].map((x) => target(x, 972))}</g>
            <path d="M650.500 873v64M679.500 873v64M741 944.500h31M724 958.500h48M652 891.500h26M765 947v9" stroke="#d2222a" stroke-width="1.300"/>
            <path d="M657 888l-6 3.500 6 3.500zM673 888l6 3.500-6 3.500zM761.500 951l3.500-6 3.500 6zM761.500 952l3.500 6 3.500-6z" fill="#e0141e"/>
            <text class="label" x="684" y="889">铜桥</text><text class="label" x="771" y="951">铜桥</text>
          </svg>${icon("ret")}
        </figure>
        <p class="last">${icon("ret")}</p>
        <svg class="arrow" width="280" height="86" viewBox="1201 483 280 86" aria-hidden="true"><path d="M1226 492L1474 561.500" stroke="#0f0" stroke-width="5" stroke-linecap="round"/><path d="M1202 485.500L1230 485v5l-3 10z" fill="#0f0" stroke="#0f0"/></svg>
      </article></div>
      <div class="bar">
        <div class="split"></div>
        <svg width="13" height="10"><path d="M0.500 2.500h5v-2h2v3h5v5h-3v1h-5v-2h-4z" fill="#f3f3f3" stroke="#444"/></svg>
        <div class="track"><i></i><div class="before"></div><div class="thumb"><svg width="8" height="8"><path d="M0 0.500h8M0 3.500h8M0 6.500h8" stroke="#53678a"/></svg></div><div class="after"></div><i></i></div>
        <button class="jump" aria-label="前一页"><svg width="7" height="8"><path d="M3.500 0l3.500 3.500h-7zM3.500 3.500L7 7H0z"/></svg></button>
        <button class="jump" aria-label="选择浏览对象"><svg width="8" height="8"><circle cx="4" cy="4" r="3" fill="#dde" stroke="#222"/></svg></button>
        <button class="jump" aria-label="下一页"><svg width="7" height="8"><path d="M3.500 4L7 0.500H0zM3.500 8L7 4.500H0z"/></svg></button>
      </div>`;
  }
}

@customElement("status-bar")
class StatusBar extends LitElement {
  static styles = [sharedStyles, css`
    :host { display: flex; align-items: stretch; height: 22px; box-sizing: border-box; font: 12px/20px "Noto Sans", "Noto Sans CJK SC", sans-serif; color: #15285a;
      border-top: 1px solid #567db1; border-bottom: 1px solid #1c4064; background: linear-gradient(#f0f6fe 0, #d7e6f9 2px, #c7dcf8 7px, #b3d0f5 8px, #cfe2fa 15px, #d3e4f9); }
    .cell { padding: 0 9px; border-right: 1px solid #9db9dc; box-shadow: inset -1px 0 #fff8; }
    .cell:first-child { padding-left: 8px; }
    .tail { margin-left: auto; display: flex; align-items: center; background: linear-gradient(#a9c6ee, #8fb4e8); padding-left: 4px; border-left: 1px solid #fff; box-shadow: inset 1px 0 #6d90c0; }
    .views { display: flex; height: 18px; border: 1px solid #7f9cc6; border-radius: 2px; background: linear-gradient(#dde8f4, #c8d8ea); }
    .views button { width: 18px; display: grid; place-items: center; border-right: 1px solid #bccce0; }
    .views .on { background: linear-gradient(#ffe0a8, #ffb64e); }
    .zoom { padding: 0 9px; }
    .ime { display: flex; align-items: center; gap: 6px; align-self: flex-end; height: 25px; width: 139px; margin-top: -5px; padding: 0 4px; background: linear-gradient(#8b939e, #3f4854 30%, #565f6b); border-top: 1px solid #d8dde4; color: #fff; position: relative; }
    .ime b { font: 16px/20px "Noto Sans CJK SC", sans-serif; }
    .grip { width: 8px; height: 17px; background: radial-gradient(circle at 1px 1px, #ddd 1px, transparent 1px) 0 0 / 3px 3px; }
    .q { width: 14px; height: 14px; border-radius: 50%; background: #1420a8; border: 1px solid #fff; font: bold 10px/12px "Liberation Sans", sans-serif; text-align: center; }
  `];
  render() {
    const v = (rows: any) => html`<svg width="12" height="12">${rows}</svg>`;
    return html`
      <span class="cell">字数: 47/3,162</span><span class="cell">插入</span>
      <div class="tail">
        <div class="views">
          <button class="on" aria-label="页面视图">${v(svg`<rect x="1.500" y="0.500" width="9" height="11" fill="#fff" stroke="#555"/><path d="M3 3.500h6M3 5.500h6M3 7.500h6M3 9.500h6" stroke="#666"/>`)}</button>
          <button aria-label="阅读版式">${v(svg`<path d="M0.500 1.500h5l.5 1 .5-1h5v8h-5l-.5 1-.5-1h-5z" fill="#fff" stroke="#555"/><path d="M6 2v8M2 4h2M2 6h2M8 4h2M8 6h2" stroke="#555"/>`)}</button>
          <button aria-label="Web 版式">${v(svg`<rect x="0.500" y="0.500" width="9" height="9" fill="#fff" stroke="#555"/><path d="M2 3.500h6M2 5.500h6" stroke="#666"/><circle cx="9" cy="9" r="3" fill="#2f8a9a"/>`)}</button>
          <button aria-label="大纲">${v(svg`<path d="M1 1.500h7M4 4.500h8M4 7.500h7M1 10.500h8" stroke="#777"/>`)}</button>
          <button aria-label="草稿">${v(svg`<path d="M0 1.500h12M0 4.500h12M0 7.500h12M0 10.500h12" stroke="#555"/>`)}</button>
        </div>
        <button class="zoom" aria-label="缩放">120%</button>
        <div class="ime">
          <span class="grip"></span>
          <svg width="16" height="15" aria-hidden="true"><rect width="16" height="15" rx="3" fill="#f4e040"/><path d="M2 12L6 3l3 9M3 9h5" stroke="#1c2fae" stroke-width="2" fill="none"/><path d="M15 5l-4-1-1 4 1 4h4M10 8h5" stroke="#d22" stroke-width="2" fill="none"/></svg>
          <b>中</b>
          <svg width="12" height="12" aria-hidden="true"><circle cx="3" cy="3" r="1.500" fill="#fff"/><path d="M9 8h2l-1.500 4h-1z" fill="#fff"/></svg>
          <svg width="16" height="15" aria-hidden="true"><rect x="0.500" y="1.500" width="10" height="10" fill="#fff" stroke="#1420a8"/><path d="M0 2h11M2 5.500h7M2 8.500h7" stroke="#1420a8" stroke-width="1.600"/><path d="M9 5v9l2-2 2 3 1-1-1-3h3z" fill="#fff" stroke="#000" stroke-width=".7"/></svg>
          <span class="q">?</span>
          <svg width="8" height="14" aria-hidden="true"><path d="M2 1.500h5" stroke="#fff" stroke-width="2"/><path d="M1 9h7l-3.500 4z" fill="#fff"/></svg>
        </div>
      </div>`;
  }
}

const tasks = [
  { icon: "shell", name: "贝壳" }, { icon: "pads", name: "PADS" }, { icon: "notepad", name: "记事本" }, { icon: "reel", name: "Genesis" },
  { icon: "cross", name: "X", stack: true }, { icon: "gee", name: "G" }, { icon: "bird", name: "钉钉" }, { icon: "floppy", name: "64" },
  { icon: "word", name: "Word", on: true }, { icon: "excel", name: "Excel", stack: true }, { icon: "reel", name: "Genesis" },
];

@customElement("task-bar")
class TaskBar extends LitElement {
  static styles = [sharedStyles, css`
    :host { display: flex; height: 40px; color: #fff; font: 12px/18px "Noto Sans", sans-serif;
      background: linear-gradient(#d0e6f455 0, #6f9cbe66 8px, #1b4f8044 16px, transparent 20px), linear-gradient(90deg, #2a6ea6 0, #4f9fcf 300px, #3f9ad0 900px, #2b80c0 1150px, #3990cc 1280px, #175a9c 1420px, #1c64a6 1700px, #123c68 1800px, #17406a); }
    .start { width: 36px; height: 36px; margin: 2px 15px 2px 8px; border-radius: 50%; border: 1px solid #a5c8de; display: grid; place-items: center; background: radial-gradient(circle at 50% 90%, #36d0f4, #13598c 55%, #5d87a5 100%); }
    .tasks { display: flex; gap: 3px; }
    .slot { width: 59px; display: flex; gap: 1px; }
    .task { flex: 1; display: grid; place-items: center; border: 1px solid #cfe4f0; outline: 1px solid #1d4b6d; outline-offset: -1px; box-shadow: inset 0 0 0 1px #e3f2fa99; border-radius: 3px; background: linear-gradient(135deg, #b9d4e4cc, #7fb2d088 50%, #5fa8d066); }
    .task.on { background: linear-gradient(135deg, #f2f8fb, #b0d3e6 60%, #9bcbe4); }
    .edge { width: 3px; border-right: 1px solid #cfe4f0; background: #5f9cc088; border-radius: 0 3px 3px 0; }
    .tray { margin-left: auto; display: flex; align-items: center; gap: 14px; }
    .tray > .up { border: 4px solid transparent; border-bottom: 4px solid #fff; border-top: 0; width: 0; height: 0; }
    .tray .ic + .ic { margin-left: -6px; }
    time { text-align: center; width: 60px; line-height: 18px; padding-top: 2px; }
    .desk { width: 14px; align-self: stretch; margin-left: -6px; border: 1px solid #8fa9c0; background: linear-gradient(135deg, #9fb6c8aa, #24486a); }
  `];
  render() {
    return html`
      <button class="start" aria-label="开始"><svg width="24" height="22" aria-hidden="true"><path d="M3 4q5-3 9 0l-2 7q-4-3-9 0z" fill="#ee5a24"/><path d="M13 4q4 3 9 0l-2 7q-5 3-9 0z" fill="#8fc63d"/><path d="M1 12q4-3 9 0l-2 7q-4-3-9 0z" fill="#3d9be0"/><path d="M11 12.500q4 3 9 0l-2 7q-5 3-9 0z" fill="#fcc81c"/></svg></button>
      <div class="tasks">
        ${tasks.map((t) => html`<div class="slot"><button class=${classMap({ task: true, on: !!t.on })} aria-label=${t.name}>${icon(t.icon)}</button>${t.stack ? html`<span class="edge"></span><span class="edge"></span>` : nothing}</div>`)}
      </div>
      <div class="tray">
        <span class="up"></span>${icon("network")}${icon("volume")}
        <time datetime="2020-12-05T15:37">15:37<br>2020/12/5</time>
        <button class="desk" aria-label="显示桌面"></button>
      </div>`;
  }
}

@customElement("app-root")
class AppRoot extends LitElement {
  static styles = css`
    :host { display: block; position: relative; }
    .app { display: flex; flex-direction: column; height: 100vh; overflow: hidden; }
    .orb { position: absolute; left: 3px; top: 3px; width: 38px; height: 38px; padding: 0; border-radius: 50%; border: 1px solid #8d8a80; display: grid; place-items: center;
      background: radial-gradient(circle at 50% 95%, #ffe65a, #f2a51e 45%, #d9c8a0 75%, #f4f4f0); box-shadow: 0 0 3px #345; }
    svg { display: block; }
  `;
  render() {
    return html`
      <div class="app">
        <title-bar></title-bar>
        <word-ribbon></word-ribbon>
        <word-document></word-document>
        <status-bar></status-bar>
        <task-bar></task-bar>
      </div>
      <button class="orb" aria-label="Office 按钮"><svg width="24" height="24" fill="none" stroke-width="3" aria-hidden="true">
        <path d="M11 3l-6 1-3 2v6l7 1V9" stroke="#d8431c"/><path d="M9 3l3 2v7" stroke="#e8641c"/><path d="M14 7h6v5h-5z" stroke="#3f83d0" stroke-width="2"/>
        <path d="M4 16h5v6H5z" stroke="#f2c01c" stroke-width="2"/><path d="M13 15h7v6l-6 1v-4" stroke="#59a531" stroke-width="2.500"/>
      </svg></button>`;
  }
}
